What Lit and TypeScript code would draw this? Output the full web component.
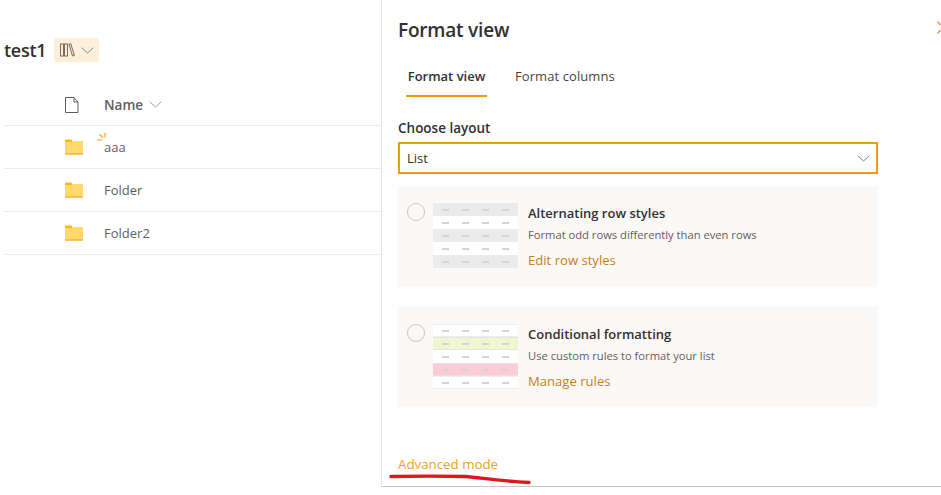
import { LitElement, html, css, svg } from "lit";
import { customElement } from "lit/decorators.js";

const folder = svg`<svg class="folder" width="20" height="16" viewBox="0 0 20 16"><path d="M1 1.5a1 1 0 0 1 1-1h5.2l2 2.5H1z" fill="#ffb900"/><path d="M1 3h8.2l1.6-1H19v13.5H1z" fill="#ffd96a"/><rect x="1" y="14.4" width="18" height="1.2" fill="#f2a93b"/></svg>`;
const chevron = (w: number, h: number, c: string) => svg`<svg width="${w}" height="${h}" viewBox="0 0 ${w} ${h}"><path d="M.7.7 ${w / 2} ${h - 1} ${w - 0.7} .7" fill="none" stroke="${c}" stroke-width="1"/></svg>`;

@customElement("app-root")
export class AppRoot extends LitElement {
  static styles = css`
    :host { display: block; width: 941px; height: 495px; overflow: hidden; background: #fff; font-family: "Open Sans", "Noto Sans", sans-serif; color: #323130; position: relative; }
    .page { display: flex; height: 495px; }
    .left { width: 377px; margin-left: 4px; flex: none; }
    .head { display: flex; align-items: center; height: 24px; margin-top: 38px; }
    .title { font-size: 18px; font-weight: 600; width: 50px; letter-spacing: -0.25px; }
    .badge { width: 45px; height: 24px; background: #fdefd9; border-radius: 2px; display: flex; align-items: center; gap: 5px; padding-left: 6px; box-sizing: border-box; }
    .cols { display: flex; align-items: center; height: 37px; padding-bottom: 2px; margin-top: 24px; border-bottom: 1px solid #edebe9; padding-left: 61px; }
    .name { font-size: 13.5px; font-weight: 600; color: #605e5c; margin-left: 25px; margin-right: 6px; }
    .row { display: flex; align-items: center; height: 42px; border-bottom: 1px solid #edebe9; padding-left: 60px; font-size: 13px; color: #605e5c; position: relative; }
    .row span { margin-left: 20px; }
    .spark { position: absolute; left: 93px; top: 7px; }
    .panel { flex: none; height: 486px; border-left: 1px solid #e6e6e6; border-bottom: 1px solid #c8c6c4; padding-left: 16px; width: 543px; display: flex; flex-direction: column; }
    .ptitle { display: flex; justify-content: space-between; align-items: center; height: 28px; margin-top: 16px; font-size: 19px; font-weight: 600; letter-spacing: -0.2px; }
    .close { margin-right: 0; margin-bottom: 5px; }
    .tabs { display: flex; margin-top: 10px; padding-left: 8px; height: 44px; }
    .tab { font-size: 13px; height: 41px; line-height: 45px; }
    .tab.on { width: 81px; text-align: center; font-weight: 600; border-bottom: 2px solid #ef9b0f; }
    .tab.off { margin-left: 28px; color: #484644; letter-spacing: 0.08px; }
    .label { margin-top: 20px; font-size: 13.5px; font-weight: 600; line-height: 20px; }
    .select { margin-top: 4px; width: 480px; height: 32px; border: 2px solid #ef9b0f; box-sizing: border-box; display: flex; justify-content: space-between; align-items: center; padding: 0 6px 0 7px; font-size: 13px; }
    .card { width: 480px; height: 101px; background: #faf9f8; display: flex; box-sizing: border-box; padding: 17px 0 0 9px; }
    .card.first { margin-top: 12px; }
    .card.second { margin-top: 19px; padding-top: 18px; }
    .radio { width: 18px; height: 18px; border: 1px solid #c8c6c4; border-radius: 50%; background: #faf9f8; box-sizing: border-box; flex: none; }
    .thumb { width: 85px; margin-left: 8px; display: grid; grid-auto-rows: 13px; align-self: flex-start; }
    .band { display: flex; justify-content: space-around; align-items: center; padding: 0 3px; }
    .band i { width: 7px; height: 2px; background: #d4d4d4; }
    .grey { background: #ebebeb; }
    .white { background: #fff; }
    .lined { background: #fff; box-shadow: inset 0 1px #eeeeee, inset 0 -1px #eeeeee; }
    .green { background: #f0f6d0; box-shadow: inset 0 1px #e4e4e4, inset 0 -1px #e4e4e4; }
    .pink { background: #fdcdd3; box-shadow: inset 0 1px #e4e4e4, inset 0 -1px #e4e4e4; }
    .info { margin-left: 10px; }
    .info h3 { margin: 0; font-size: 13px; font-weight: 600; line-height: 20px; }
    .info p { margin: 4px 0 0; font-size: 11.2px; line-height: 16px; color: #605e5c; }
    .info a { display: block; margin-top: 7px; font-size: 13.1px; line-height: 20px; color: #c47f17; }
    .adv { margin-top: 47px; font-size: 13.3px; line-height: 20px; color: #f0a020; }
    .red { position: absolute; left: 385px; top: 470px; }
  `;

  private thumb(rows: string[]) {
    return html`<div class="thumb">${rows.map(
      (r) => html`<div class="band ${r}"><i></i><i></i><i></i><i></i></div>`
    )}</div>`;
  }

  render() {
    return html`
      <div class="page">
        <div class="left">
          <div class="head">
            <div class="title">test1</div>
            <div class="badge">
              <svg width="16" height="14" viewBox="0 0 16 14" fill="none" stroke="#7a6a58" stroke-width="1"><rect x=".5" y="1" width="3" height="12"/><rect x="4.5" y="1" width="3" height="12"/><path d="M9 1.2 10.8 .8l3.6 11.6-1.9.6z"/></svg>
              ${chevron(13, 7, "#8a8886")}
            </div>
          </div>
          <div class="cols">
            <svg width="14" height="16" viewBox="0 0 14 16" fill="none" stroke="#605e5c" stroke-width="1"><path d="M.5.5h8.5l4 4.5v10.5H.5zM9 .5V5h4"/></svg>
            <span class="name">Name</span>
            ${chevron(13, 7, "#a19f9d")}
          </div>
          <div class="row">
            ${folder}<span>aaa</span>
            <svg class="spark" width="10" height="10" viewBox="0 0 10 10" fill="none" stroke="#f0a020" stroke-width="1.2"><path d="M8 0v4.5M2.5 1.5l3.5 3M0 7h5.5"/></svg>
          </div>
          <div class="row">${folder}<span>Folder</span></div>
          <div class="row">${folder}<span>Folder2</span></div>
        </div>
        <div class="panel">
          <div class="ptitle">
            <span>Format view</span>
            <svg class="close" width="4" height="13" viewBox="0 0 4 13" fill="none" stroke="#f0883c" stroke-width="1.2"><path d="M.5 .5 3.5 4M3.5 9 .5 12.5"/></svg>
          </div>
          <div class="tabs">
            <div class="tab on">Format view</div>
            <div class="tab off">Format columns</div>
          </div>
          <div class="label">Choose layout</div>
          <div class="select"><span>List</span>${chevron(13, 7, "#5f88b0")}</div>
          <div class="card first">
            <div class="radio"></div>
            ${this.thumb(["grey", "white", "grey", "white", "grey"])}
            <div class="info">
              <h3>Alternating row styles</h3>
              <p>Format odd rows differently than even rows</p>
              <a>Edit row styles</a>
            </div>
          </div>
          <div class="card second">
            <div class="radio"></div>
            ${this.thumb(["lined", "green", "white", "pink", "lined"])}
            <div class="info">
              <h3>Conditional formatting</h3>
              <p>Use custom rules to format your list</p>
              <a>Manage rules</a>
            </div>
          </div>
          <div class="adv">Advanced mode</div>
        </div>
      </div>
      <svg class="red" width="150" height="16" viewBox="0 0 150 16" fill="none"><path d="M6 6.5C30 6 60 6 80 6.5C95 7.5 110 10.5 144 12.5" stroke="#e0161e" stroke-width="3.4" stroke-linecap="round"/></svg>
    `;
  }
}
